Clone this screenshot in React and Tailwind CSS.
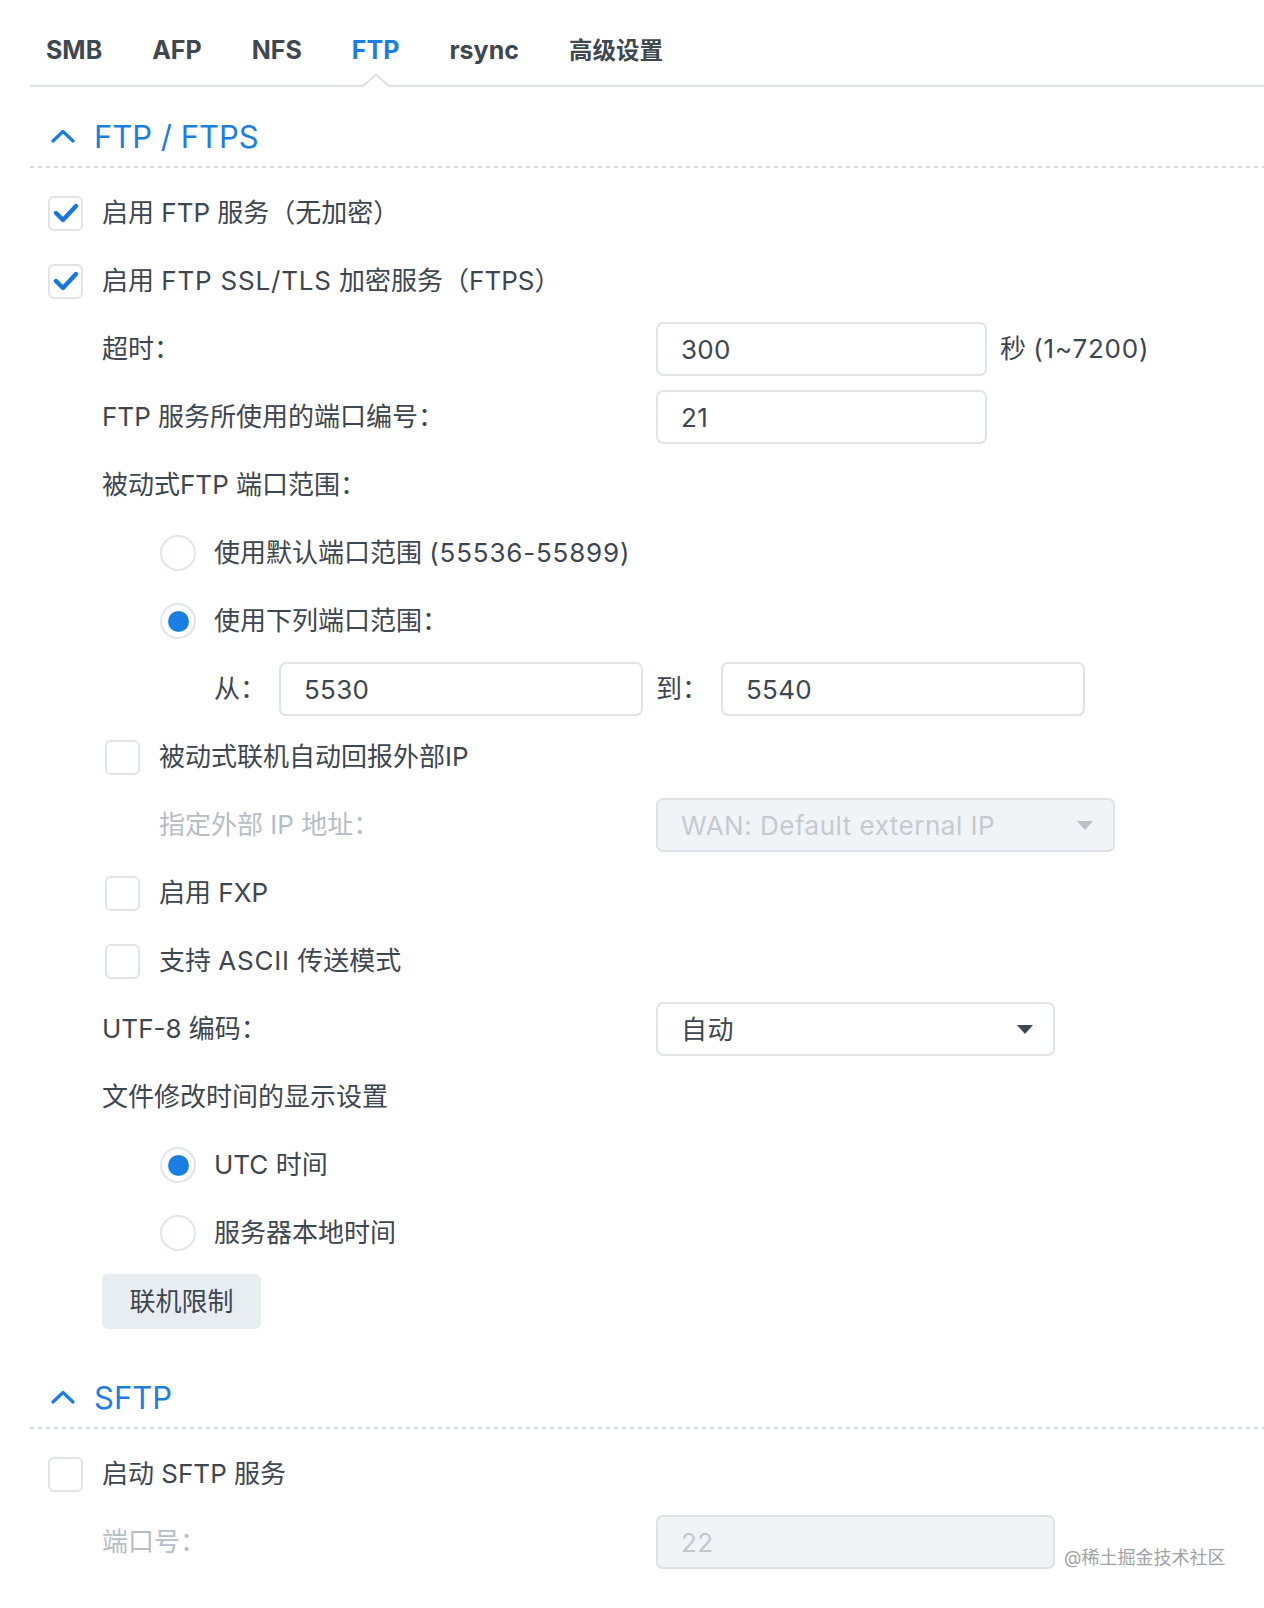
import { useState } from 'react'

const FONT = { fontFamily: 'Inter, "Noto Sans CJK SC", sans-serif' }

const tabs = ['SMB', 'AFP', 'NFS', 'FTP', 'rsync', '高级设置']

const Checkbox = ({ checked, onClick }) => (
  <span
    onClick={onClick}
    className="flex h-[35px] w-[35px] shrink-0 items-center justify-center rounded-[6px] border-2 border-[#dfe4e9] bg-white"
  >
    {checked && (
      <svg width="26" height="22" viewBox="0 0 26 22">
        <polyline
          points="3,11 10,18 23,4"
          fill="none"
          stroke="#1677dd"
          strokeWidth="4.4"
          strokeLinecap="round"
          strokeLinejoin="round"
        />
      </svg>
    )}
  </span>
)

const Radio = ({ checked, onClick }) => (
  <span
    onClick={onClick}
    className="flex h-[36px] w-[36px] shrink-0 items-center justify-center rounded-full border-2 border-[#e1e6eb] bg-white"
  >
    {checked && <span className="h-[21px] w-[21px] rounded-full bg-[#1a7ee2]" />}
  </span>
)

const Caret = ({ color }) => (
  <svg width="16" height="9" viewBox="0 0 16 9">
    <polygon points="0,0 16,0 8,9" fill={color} />
  </svg>
)

const Field = ({ value, className = '', disabled }) => (
  <div
    className={`flex h-[54px] items-center rounded-[7px] border-2 pl-[23px] text-[26px] tracking-[0.3px] ${
      disabled ? 'border-[#dde2e7] bg-[#f1f4f7] text-[#c1c7ce]' : 'border-[#dfe4e9] bg-white text-[#3e464f]'
    } ${className}`}
  >
    {value}
  </div>
)

const Select = ({ value, className = '', disabled }) => (
  <div
    className={`flex h-[54px] items-center justify-between rounded-[7px] border-2 pl-[23px] pr-[20px] text-[26px] ${
      disabled ? 'border-[#dde2e7] bg-[#f1f4f7] text-[#c4cad1]' : 'border-[#dfe4e9] bg-white text-[#3e464f]'
    } ${className}`}
  >
    <span className="tracking-[0.5px]">{value}</span>
    <Caret color={disabled ? '#b8bfc6' : '#3e464f'} />
  </div>
)

const Row = ({ children, className = '' }) => (
  <div className={`flex h-[68px] items-center ${className}`}>{children}</div>
)

const Label = ({ children, disabled, className = '' }) => (
  <span className={`text-[26px] leading-none ${disabled ? 'text-[#b6bdc5]' : 'text-[#3e464f]'} ${className}`}>
    {children}
  </span>
)

// latin runs in the reference font are a touch wider than Inter
const W = ({ children }) => <span className="tracking-[0.8px]">{children}</span>

const SectionHeader = ({ title, className = '' }) => (
  <div className={className}>
    <div className="flex h-[60px] items-center pl-[21px]">
      <svg width="24" height="14" viewBox="0 0 24 14">
        <polyline points="2,12 12,2.5 22,12" fill="none" stroke="#1a7ee2" strokeWidth="3.2" strokeLinecap="round" strokeLinejoin="round" />
      </svg>
      <span className="ml-[19px] text-[31px] leading-none text-[#1a7ee2]">{title}</span>
    </div>
    <div className="h-[2px] bg-[linear-gradient(to_right,#d6dce2_50%,transparent_50%)] bg-[length:8px_2px] bg-repeat-x" />
  </div>
)

export default function App() {
  const [pasv, setPasv] = useState('custom')
  const [tz, setTz] = useState('utc')

  return (
    <div className="relative min-h-[1608px] w-[1264px] bg-white" style={FONT}>
      <div className="ml-[30px]">
        {/* tab bar */}
        <div className="flex h-[87px] gap-[50px] border-b-2 border-[#dbe1e6] pl-[16px]">
          {tabs.map((t) => (
            <div key={t} className="relative flex h-full items-center pt-[16px]">
              <span
                className={`font-bold ${t === '高级设置' ? 'text-[23.5px]' : 'text-[25px]'} ${
                  t === 'FTP' ? 'text-[#1a7ee2]' : 'text-[#40484f]'
                }`}
              >
                {t}
              </span>
              {t === 'FTP' && (
                <svg className="absolute bottom-[-2px] left-1/2 -translate-x-1/2" width="26" height="14" viewBox="0 0 26 14">
                  <polygon points="0,14 13,1.5 26,14" fill="#fff" />
                  <polyline points="0,13 13,1.5 26,13" fill="none" stroke="#dbe1e6" strokeWidth="2" />
                </svg>
              )}
            </div>
          ))}
        </div>

        <SectionHeader title="FTP / FTPS" className="mt-[19px]" />

        <div className="mt-[11px] pl-[18px]">
          <Row>
            <Checkbox checked />
            <Label className="ml-[19px]">启用 FTP 服务（无加密）</Label>
          </Row>
          <Row>
            <Checkbox checked />
            <Label className="ml-[19px]">启用 <W>FTP SSL/TLS</W> 加密服务（FTPS）</Label>
          </Row>

          <div className="pl-[54px]">
            <Row>
              <Label className="w-[554px]">超时：</Label>
              <Field value="300" className="w-[331px]" />
              <Label className="ml-[13px]">秒 <W>(1~7200)</W></Label>
            </Row>
            <Row>
              <Label className="w-[554px]">FTP 服务所使用的端口编号：</Label>
              <Field value="21" className="w-[331px]" />
            </Row>
            <Row>
              <Label>被动式FTP 端口范围：</Label>
            </Row>
            <div className="pl-[58px]">
              <Row>
                <Radio checked={pasv === 'default'} onClick={() => setPasv('default')} />
                <Label className="ml-[18px]">使用默认端口范围 <W>(55536-55899)</W></Label>
              </Row>
              <Row>
                <Radio checked={pasv === 'custom'} onClick={() => setPasv('custom')} />
                <Label className="ml-[18px]">使用下列端口范围：</Label>
              </Row>
              <Row className="pl-[54px]">
                <Label className="w-[65px]">从：</Label>
                <Field value="5530" className="w-[364px]" />
                <Label className="ml-[13px] w-[65px]">到：</Label>
                <Field value="5540" className="w-[364px]" />
              </Row>
            </div>
            <Row className="pl-[3px]">
              <Checkbox />
              <Label className="ml-[19px]">被动式联机自动回报外部IP</Label>
            </Row>
            <Row className="pl-[57px]">
              <Label disabled className="w-[497px]">指定外部 IP 地址：</Label>
              <Select disabled value="WAN: Default external IP" className="w-[459px]" />
            </Row>
            <Row className="pl-[3px]">
              <Checkbox />
              <Label className="ml-[19px]">启用 FXP</Label>
            </Row>
            <Row className="pl-[3px]">
              <Checkbox />
              <Label className="ml-[19px]">支持 <W>ASCII</W> 传送模式</Label>
            </Row>
            <Row>
              <Label className="w-[554px]">UTF-8 编码：</Label>
              <Select value="自动" className="w-[399px]" />
            </Row>
            <Row>
              <Label>文件修改时间的显示设置</Label>
            </Row>
            <div className="pl-[58px]">
              <Row>
                <Radio checked={tz === 'utc'} onClick={() => setTz('utc')} />
                <Label className="ml-[18px]">UTC 时间</Label>
              </Row>
              <Row>
                <Radio checked={tz === 'local'} onClick={() => setTz('local')} />
                <Label className="ml-[18px]">服务器本地时间</Label>
              </Row>
            </div>
            <Row>
              <button className="flex h-[55px] w-[159px] items-center justify-center rounded-[6px] bg-[#e8edf2] text-[26px] text-[#3e464f]">
                联机限制
              </button>
            </Row>
          </div>
        </div>

        <SectionHeader title="SFTP" className="mt-[32px]" />

        <div className="mt-[11px] pl-[18px]">
          <Row>
            <Checkbox />
            <Label className="ml-[19px]">启动 SFTP 服务</Label>
          </Row>
          <Row className="pl-[54px]">
            <Label disabled className="w-[554px]">端口号：</Label>
            <Field disabled value="22" className="w-[399px]" />
          </Row>
        </div>
      </div>

      <span className="absolute left-[1064px] top-[1549px] text-[18px] leading-none text-[#9ea3a8]">@稀土掘金技术社区</span>
    </div>
  )
}
